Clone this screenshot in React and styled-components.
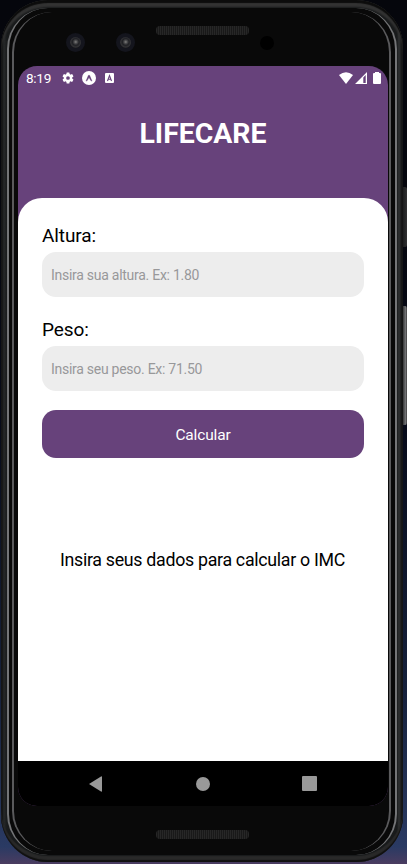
import React from "react";
import styled, { createGlobalStyle } from "styled-components";

const GlobalStyle = createGlobalStyle`
  * { box-sizing: border-box; }
  body { margin: 0; font-family: Roboto, sans-serif; overflow: hidden; }
`;

const Desktop = styled.div`
  display: flex;
  width: 407px;
  height: 864px;
  padding-left: 1px;
  background: linear-gradient(#05060c 0, #05060d 22%, #070b1a 50%, #16213c 80%, #2a3a63 98%, #4a3c60 100%);
`;

const Frame = styled.div`
  width: 402px;
  height: 862px;
  padding: 8px 6px 7px;
  border-radius: 47px;
  background: linear-gradient(90deg, #080808 0, #262829 3px, #181a1b 6px, #181a1b 396px, #303233 398px, #080808 402px);
  box-shadow: inset 0 3px 1px #0c0c0c, inset 0 7px 2px #333, inset 0 -2px 1px #101010, inset 0 -6px 1px #292929;
`;

const Rail = styled.div`
  height: 100%;
  padding: 4px 4px 4px 3px;
  border-style: solid;
  border-width: 0 2px;
  border-color: #606163 #747577;
  border-radius: 41px;
  background: #090909;
`;

const Rim = styled.div`
  display: flex;
  flex-direction: column;
  height: 100%;
  padding: 0 1px 0 4px;
  border: solid #5a5a5c;
  border-width: 0 2px;
  border-radius: 40px;
  background: #090909;
`;

const TopBezel = styled.div`
  display: flex;
  align-items: flex-start;
  flex: 0 0 54px;
  padding: 14px 0 0 48px;
`;

const Camera = styled.div`
  width: 19px;
  height: 19px;
  margin: 7px 31px 0 0;
  border: 4px solid #14151d;
  border-radius: 50%;
  background: radial-gradient(circle at 52% 45%, #80807e 0, #48484a 20%, #1f2024 40%, #333336 62%, #111 80%);
  & + & { margin-right: 21px; }
`;

const Speaker = styled.div`
  width: 93px;
  height: 9px;
  border-radius: 4px;
  background: repeating-linear-gradient(90deg, #272727 0 1px, #191919 1px 2px);
`;

const Sensor = styled.div`
  width: 14px;
  height: 14px;
  margin: 10px 0 0 11px;
  border-radius: 50%;
  background: #000;
`;

const Screen = styled.div`
  display: flex;
  flex-direction: column;
  flex: 0 0 740px;
  border-radius: 19px;
  overflow: hidden;
  background: #67427b;
`;

const StatusBar = styled.div`
  display: flex;
  align-items: center;
  flex: 0 0 23px;
  padding: 0 7px 0 8px;
  color: #fff;
  svg { display: block; }
`;

const Clock = styled.span`
  width: 35px;
  padding-top: 1px;
  font-size: 13.6px;
  line-height: 22px;
  letter-spacing: -0.3px;
`;

const StatusIcons = styled.div`
  display: flex;
  align-items: center;
  gap: ${(p) => p.$gap}px;
  margin-left: ${(p) => (p.$end ? "auto" : 0)};
`;

const KeyboardSlot = styled.span`
  margin-left: 2px;
`;

const BatterySlot = styled.span`
  margin-left: 4px;
`;

const Title = styled.h1`
  flex: 0 0 109px;
  margin: 0;
  padding-top: 28px;
  color: #fff;
  font-size: 28.4px;
  line-height: 34px;
  font-weight: 700;
  text-align: center;
`;

const Sheet = styled.main`
  display: flex;
  flex-direction: column;
  flex: 1;
  padding: 25px 24px 0;
  border-radius: 24px 24px 0 0;
  background: #fff;
`;

const Label = styled.label`
  height: 29px;
  color: #000;
  font-size: 19px;
  line-height: 26px;
  letter-spacing: -0.1px;
`;

const Input = styled.input`
  width: 322px;
  height: 45px;
  margin: 0 0 20px;
  padding: 1px 9px 0;
  border: 0;
  border-radius: 14px;
  outline: 0;
  background: #ededed;
  font-family: Roboto, sans-serif;
  font-size: 14px;
  letter-spacing: -0.27px;
  &::placeholder { color: #98989a; opacity: 1; }
`;

const Button = styled.button`
  width: 322px;
  height: 48px;
  margin-top: -1px;
  padding: 1px 0 0;
  border: 0;
  border-radius: 14px;
  background: #67427b;
  color: #fff;
  font-family: Roboto, sans-serif;
  font-size: 15.5px;
  letter-spacing: -0.15px;
`;

const Result = styled.p`
  margin: 90px 1px 0 0;
  color: #000;
  font-size: 17.8px;
  line-height: 24px;
  letter-spacing: -0.3px;
  text-align: center;
  white-space: nowrap;
`;

const NavBar = styled.nav`
  display: flex;
  align-items: center;
  flex: 0 0 45px;
  gap: 92px;
  padding-left: 71px;
  background: #000;
  svg { display: block; }
`;

const BottomBezel = styled.div`
  display: flex;
  justify-content: center;
  padding: 24px 2px 0 0;
`;

const SideKeys = styled.div`
  display: flex;
  flex-direction: column;
  width: 4px;
  padding-top: 187px;
`;

const Key = styled.div`
  height: ${(p) => p.$height}px;
  margin-bottom: 59px;
  border-radius: 0 2px 2px 0;
  background: ${(p) => p.$bright
    ? "linear-gradient(90deg, #353637, #77787a 70%, #333)"
    : "linear-gradient(90deg, #1c1d1e, #303132)"};
`;

const GearIcon = () => (
  <svg width="14" height="14" viewBox="0 0 24 24" fill="currentColor">
    <path d="M19.14 12.94c.04-.3.06-.61.06-.94s-.02-.64-.07-.94l2.03-1.58a.5.5 0 0 0 .12-.61l-1.92-3.32a.49.49 0 0 0-.59-.22l-2.39.96a7 7 0 0 0-1.62-.94l-.36-2.54a.48.48 0 0 0-.48-.41h-3.84a.48.48 0 0 0-.47.41l-.36 2.54c-.59.24-1.13.57-1.62.94l-2.39-.96a.48.48 0 0 0-.59.22L2.74 8.87a.47.47 0 0 0 .12.61l2.03 1.58a6 6 0 0 0 0 1.88l-2.03 1.58a.5.5 0 0 0-.12.61l1.92 3.32c.12.22.37.29.59.22l2.39-.96c.5.38 1.03.7 1.62.94l.36 2.54c.05.24.24.41.48.41h3.84c.24 0 .44-.17.47-.41l.36-2.54a7 7 0 0 0 1.62-.94l2.39.96c.22.08.47 0 .59-.22l1.92-3.32a.47.47 0 0 0-.12-.61zM12 15.2a3.2 3.2 0 1 1 0-6.4 3.2 3.2 0 0 1 0 6.4z" />
  </svg>
);

const ExpoIcon = () => (
  <svg width="14" height="14" viewBox="0 0 14 14">
    <circle cx="7" cy="7" r="7" fill="#fff" />
    <path d="M4 10.1 6.3 4.6Q7 3.2 7.7 4.6L10 10.1 8.8 9.6 7 6.4 5.2 9.6Z" fill="#67427b" stroke="#67427b" strokeWidth=".4" />
  </svg>
);

const KeyboardIcon = () => (
  <svg width="9" height="10" viewBox="0 0 9 10">
    <rect width="9" height="10" rx="1" fill="#fff" />
    <path d="M2.5 8 4.5 2.5 6.5 8M3.2 6.2h2.6" fill="none" stroke="#67427b" strokeWidth="1.1" />
  </svg>
);

const WifiIcon = () => (
  <svg width="14" height="12" viewBox="0 0 14 12" fill="currentColor">
    <path d="M0 3Q7-2.6 14 3L7 12Z" />
  </svg>
);

const SignalIcon = () => (
  <svg width="12" height="12" viewBox="0 0 12 12" fill="currentColor">
    <path fillRule="evenodd" d="M0 12 12 0V12ZM8.3 5.5V11h2.4V3Z" />
  </svg>
);

const BatteryIcon = () => (
  <svg width="8" height="12" viewBox="0 0 8 12" fill="currentColor">
    <path d="M2 0h4v1h1q1 0 1 1v9q0 1-1 1H1q-1 0-1-1V2q0-1 1-1h1Z" />
  </svg>
);

const BackIcon = () => (
  <svg width="15" height="16" viewBox="1 0 15 16" fill="#999">
    <path d="M1 8 13 .5q1-.5 1 .5v14q0 1-1 .5Z" />
  </svg>
);

const HomeIcon = () => (
  <svg width="14" height="14" viewBox="0 0 14 14" fill="#999">
    <circle cx="7" cy="7" r="7" />
  </svg>
);

const RecentsIcon = () => (
  <svg width="15" height="15" viewBox="0 0 15 15" fill="#999">
    <rect width="15" height="15" rx="1" />
  </svg>
);

export default function App() {
  return (
    <Desktop>
      <GlobalStyle />
      <Frame>
        <Rail>
          <Rim>
            <TopBezel>
              <Camera />
              <Camera />
              <Speaker />
              <Sensor />
            </TopBezel>
            <Screen>
              <StatusBar>
                <Clock>8:19</Clock>
                <StatusIcons $gap={7}>
                  <GearIcon />
                  <ExpoIcon />
                  <KeyboardSlot><KeyboardIcon /></KeyboardSlot>
                </StatusIcons>
                <StatusIcons $gap={2} $end>
                  <WifiIcon />
                  <SignalIcon />
                  <BatterySlot><BatteryIcon /></BatterySlot>
                </StatusIcons>
              </StatusBar>
              <Title>LIFECARE</Title>
              <Sheet>
                <Label htmlFor="altura">Altura:</Label>
                <Input id="altura" placeholder="Insira sua altura. Ex: 1.80" />
                <Label htmlFor="peso">Peso:</Label>
                <Input id="peso" placeholder="Insira seu peso. Ex: 71.50" />
                <Button type="button">Calcular</Button>
                <Result>Insira seus dados para calcular o IMC</Result>
              </Sheet>
              <NavBar>
                <BackIcon />
                <HomeIcon />
                <RecentsIcon />
              </NavBar>
            </Screen>
            <BottomBezel>
              <Speaker />
            </BottomBezel>
          </Rim>
        </Rail>
      </Frame>
      <SideKeys>
        <Key $height={60} />
        <Key $height={119} $bright />
      </SideKeys>
    </Desktop>
  );
}
